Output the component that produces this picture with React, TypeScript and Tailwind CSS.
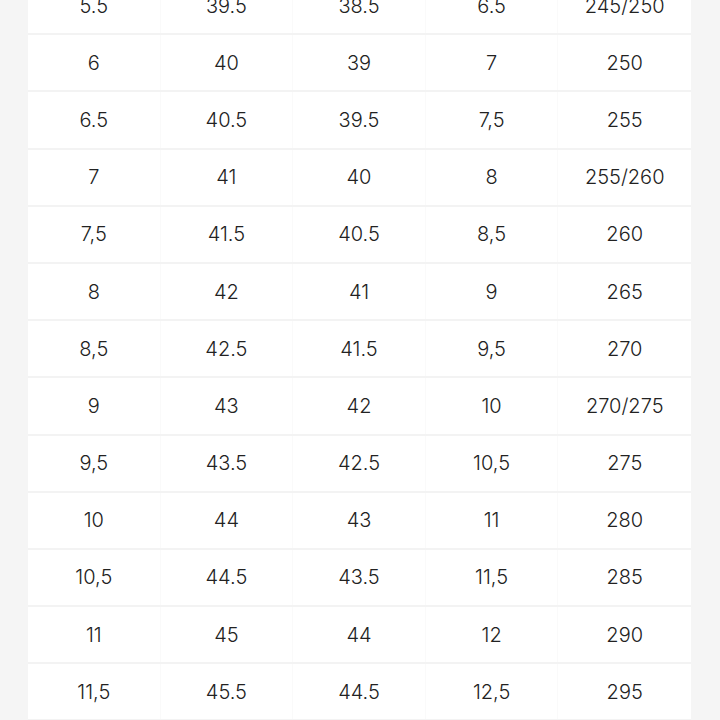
import React from 'react';

const rows: string[][] = [
  ['5.5', '39.5', '38.5', '6.5', '245/250'],
  ['6', '40', '39', '7', '250'],
  ['6.5', '40.5', '39.5', '7,5', '255'],
  ['7', '41', '40', '8', '255/260'],
  ['7,5', '41.5', '40.5', '8,5', '260'],
  ['8', '42', '41', '9', '265'],
  ['8,5', '42.5', '41.5', '9,5', '270'],
  ['9', '43', '42', '10', '270/275'],
  ['9,5', '43.5', '42.5', '10,5', '275'],
  ['10', '44', '43', '11', '280'],
  ['10,5', '44.5', '43.5', '11,5', '285'],
  ['11', '45', '44', '12', '290'],
  ['11,5', '45.5', '44.5', '12,5', '295'],
];

export default function App() {
  return (
    <div className="w-[720px] h-[720px] overflow-hidden bg-[#f5f5f5] flex items-start">
      <div className="ml-[28px] w-[663px] -mt-[22px] bg-white flex flex-col">
        {rows.map((r, i) => (
          <div key={i} className="shrink-0 grid grid-cols-5 h-[57.2px] border-b-2 border-[#f3f3f3]">
            {r.map((c, j) => (
              <div
                key={j}
                className={`flex items-center justify-center text-[20px] font-light text-[#222] ${
                  j < 4 ? 'border-r border-[#fafafa]' : ''
                }`}
                style={{ fontFamily: 'Inter, "Noto Sans", sans-serif' }}
              >
                {c}
              </div>
            ))}
          </div>
        ))}
      </div>
    </div>
  );
}
